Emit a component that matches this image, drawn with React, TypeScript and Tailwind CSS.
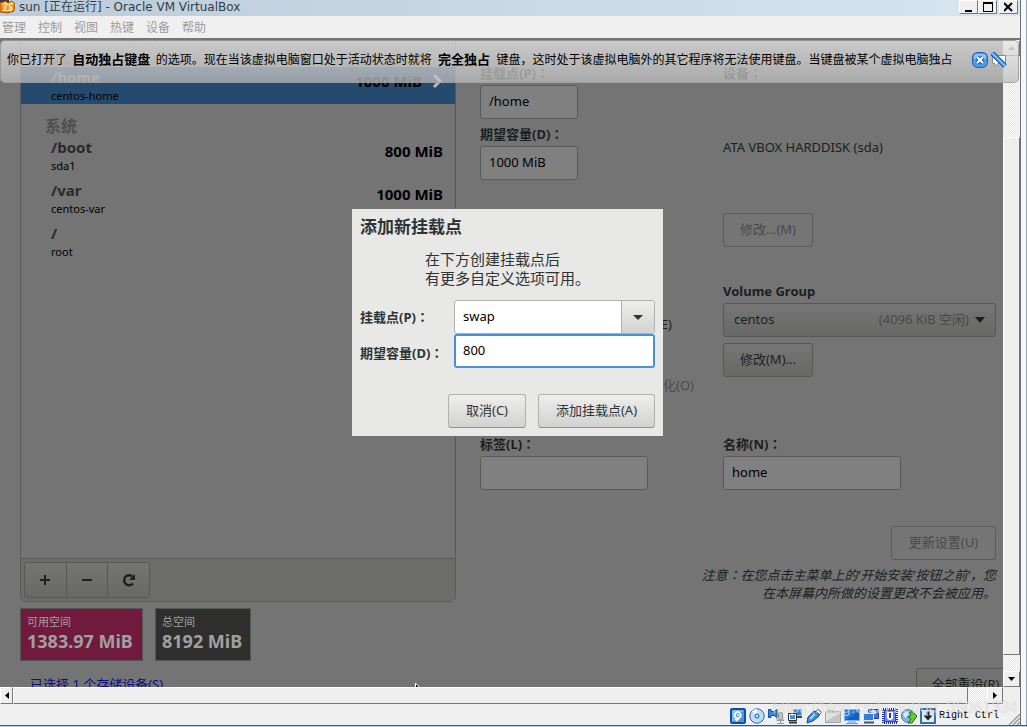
import { useState } from "react";
import type { ReactNode } from "react";

const menus = ["管理", "控制", "视图", "热键", "设备", "帮助"];

const systemMounts = [
  { path: "/boot", device: "sda1", size: "800 MiB" },
  { path: "/var", device: "centos-var", size: "1000 MiB" },
  { path: "/", device: "root", size: "" },
];

const guestFont = "font-['Noto_Sans','Noto_Sans_CJK_SC',sans-serif]";
const fieldClass =
  "block h-[34px] rounded-[3px] border border-[#5a5a5a] bg-[#808080] px-2 pb-[2px] text-[13px] text-black outline-none";
const buttonClass =
  "h-[34px] rounded-[3px] border border-[#575755] bg-linear-to-b from-[#757575] to-[#686866] text-[13px] text-[#1a1f1f]";
const disabledClass =
  "h-[34px] rounded-[3px] border border-[#5c5c5c] bg-[#757575] text-[13px] text-[#484a4a]";
const labelClass = "block text-[13px] leading-[18px] font-bold text-[#1a1f1f]";
const dialogButtonClass =
  "h-[34px] rounded-[3px] border border-[#b0b0ae] border-b-[#929290] bg-linear-to-b from-[#eeeeed] to-[#d2d2d0] text-[13px] text-[#2e3436]";
const raisedClass =
  "flex shrink-0 items-center justify-center border border-t-white border-l-white border-r-[#777] border-b-[#777] bg-[#efefef]";
const trackClass =
  "bg-[repeating-conic-gradient(#ffffff_0_25%,#e4e4e4_0_50%)] bg-[length:2px_2px]";

// full-width colon set in the middle of its cell
function Colon() {
  return <span className="font-['Noto_Sans_CJK_JP',sans-serif]">：</span>;
}

function StatusIcon({ label, children }: { label: string; children: ReactNode }) {
  return (
    <svg width="16" height="16" viewBox="0 0 16 16" role="img" aria-label={label}>
      {children}
    </svg>
  );
}

function TitleBar() {
  return (
    <header className="flex h-4 shrink-0 items-start justify-between overflow-hidden bg-linear-to-r from-[#bccbd9] to-[#d8e6f2]">
      <div className="flex items-center gap-1">
        <svg width="15" height="14" viewBox="0 0 15 14" aria-hidden="true">
          <path d="M0 0h9v4H0z" fill="#3c3c3c" />
          <path d="M0 3l6-2 2 2 4-2 3 3-1 7-6 2-8-1z" fill="#f08c14" stroke="#a85404" />
          <path d="M1 4l5-2 2 2 4-2 2 2-6 2z" fill="#ffd775" />
          <text x="3" y="11" fontSize="7" fontWeight="bold" fill="#fff" fontFamily="Liberation Sans">
            2.6
          </text>
        </svg>
        <h1 className="text-[12px] leading-[12px] text-[#333c46] font-['DejaVu_Sans','Noto_Sans_CJK_SC',sans-serif]">
          sun [正在运行] - Oracle VM VirtualBox
        </h1>
      </div>
      <div className="flex pr-[2px]">
        <button aria-label="最小化" className={`${raisedClass} h-[14px] w-[19px]`}>
          <svg width="9" height="10" viewBox="0 0 9 10">
            <path d="M1 8h7v2H1z" />
          </svg>
        </button>
        <button aria-label="最大化" className={`${raisedClass} h-[14px] w-[19px]`}>
          <svg width="10" height="10" viewBox="0 0 10 10">
            <path d="M0 0h10v10H0zM1 2v7h8V2z" fillRule="evenodd" />
          </svg>
        </button>
        <button aria-label="关闭" className={`${raisedClass} ml-[2px] h-[14px] w-[19px]`}>
          <svg width="9" height="10" viewBox="0 0 9 10">
            <path d="M0 1l8 8M8 1L0 9" stroke="#000" strokeWidth="2" />
          </svg>
        </button>
      </div>
    </header>
  );
}

function MenuBar() {
  return (
    <nav className="flex h-[22px] shrink-0 items-center gap-3 bg-[#f0f0f0] px-[2px] pt-[2px] text-[12px] leading-4 text-[#9c9c9c]">
      {menus.map((m) => (
        <button key={m}>{m}</button>
      ))}
    </nav>
  );
}

function CaptureNotice() {
  return (
    <div className="absolute top-0 -right-4 left-0 z-20 flex h-[43px] items-center justify-between rounded-[5px] border border-[#8c8c8c]/70 bg-linear-to-b from-[#e6e6e6]/75 to-[#bdbdbd]/75 pr-[11px] pb-1 pl-[6px]">
      <p className="text-[12px] whitespace-nowrap text-black">
        你已打开了 <b className="mx-[2px] text-[13px]">自动独占键盘</b> 的选项。现在当该虚拟电脑窗口处于活动状态时就将{" "}
        <b className="mx-[3px] text-[13px]">完全独占</b>{" "}
        键盘，这时处于该虚拟电脑外的其它程序将无法使用键盘。当键盘被某个虚拟电脑独占
      </p>
      <div className="flex items-center gap-[3px]">
        <button aria-label="关闭消息">
          <svg width="16" height="16" viewBox="0 0 16 16">
            <rect x=".5" y=".5" width="15" height="15" rx="5" fill="#4d9be6" stroke="#1c5cae" />
            <path d="M2 5q0-3 3-3h6q3 0 3 3v2H2z" fill="#8ec5f7" />
            <path d="M5 5l6 6M11 5l-6 6" stroke="#1c5cae" strokeWidth="4" />
            <path d="M5 5l6 6M11 5l-6 6" stroke="#fff" strokeWidth="2" />
          </svg>
        </button>
        <button aria-label="不再显示">
          <svg width="16" height="16" viewBox="0 0 16 16">
            <path d="M1.500 3.500h13v8H7l-3 3v-3H1.500z" fill="#fff" stroke="#8a8a8a" />
            <path d="M1 1l13 13" stroke="#1450a0" strokeWidth="5" />
            <path d="M1 1l13 13" stroke="#58a6ea" strokeWidth="3" />
            <path d="M1 1l13 13" stroke="#a9d4f8" strokeWidth="1" />
          </svg>
        </button>
      </div>
    </div>
  );
}

function MountList() {
  return (
    <section className="ml-5 flex w-[436px] shrink-0 flex-col rounded-b-md border border-[#595959]">
      <div className="min-h-[535px]">
        <h2 className="ml-4 text-[15px] leading-5 font-bold text-black">新 CentOS 7 安装</h2>
        <h3 className="mt-1 ml-6 text-[16px] leading-5 font-bold text-[#525252]">数据</h3>
        <div className="flex h-[37px] items-start justify-between bg-[#254a6e] pr-3 pl-[30px]">
          <div>
            <div className="text-[15px] leading-5 font-bold text-[#8a8078]">/home</div>
            <div className="text-[11px] leading-[18px] text-black">centos-home</div>
          </div>
          <div className="mt-1 flex items-center gap-[10px]">
            <span className="text-[15px] leading-5 font-bold text-black">1000 MiB</span>
            <svg width="11" height="16" viewBox="0 0 11 16" aria-hidden="true">
              <path d="M2 2l6 6-6 6" fill="none" stroke="#b8b8b8" strokeWidth="3" />
            </svg>
          </div>
        </div>
        <h3 className="mt-3 ml-6 text-[16px] leading-5 font-bold text-[#4f4f4f]">系统</h3>
        <ul className="mt-px flex flex-col gap-[6px]">
          {systemMounts.map((m) => (
            <li key={m.path} className="flex h-[37px] items-start justify-between pr-3 pl-[30px]">
              <div>
                <div className="text-[15px] leading-5 font-bold text-[#2a2a2a]">{m.path}</div>
                <div className="text-[11px] leading-[18px] text-black">{m.device}</div>
              </div>
              <span className="mt-1 text-[15px] leading-5 font-bold text-black">{m.size}</span>
            </li>
          ))}
        </ul>
      </div>
      <div className="flex h-[43px] items-center rounded-b-md border-t border-[#595959] bg-[#6c6c6a] px-[3px]">
        <div className="flex h-9 w-[126px] divide-x divide-[#575755] rounded-[3px] border border-[#575755] bg-linear-to-b from-[#757575] to-[#686866]">
          <button aria-label="添加" className="flex flex-1 items-center justify-center">
            <svg width="12" height="12" viewBox="0 0 12 12">
              <path d="M6 1v10M1 6h10" stroke="#1a1f1f" strokeWidth="2" />
            </svg>
          </button>
          <button aria-label="删除" className="flex flex-1 items-center justify-center">
            <svg width="12" height="12" viewBox="0 0 12 12">
              <path d="M1 6h10" stroke="#1a1f1f" strokeWidth="2" />
            </svg>
          </button>
          <button aria-label="重新载入" className="flex flex-1 items-center justify-center">
            <svg width="16" height="16" viewBox="0 0 16 16">
              <path d="M12 11.500A5 5 0 1 1 11.500 4.600" fill="none" stroke="#1a1f1f" strokeWidth="2.400" />
              <path d="M14 2v6H8z" fill="#1a1f1f" />
            </svg>
          </button>
        </div>
      </div>
    </section>
  );
}

function MountForm() {
  return (
    <section className="ml-6 min-w-0 flex-1 pr-[19px]">
      <h2 className="text-[15px] leading-5 font-bold text-black">centos-home</h2>
      <div className="mt-[22px] grid grid-cols-[243px_1fr]">
        <div>
          <label htmlFor="mount" className={labelClass}>挂载点(P)<Colon /></label>
          <input id="mount" defaultValue="/home" className={`${fieldClass} mt-[3px] w-[98px]`} />
          <label htmlFor="size" className={`${labelClass} mt-[6px]`}>期望容量(D)<Colon /></label>
          <input id="size" defaultValue="1000 MiB" className={`${fieldClass} mt-[3px] w-[98px]`} />
          <div className="mt-[135px] w-[192px] text-right text-[13px] leading-[18px] text-[#1a1f1f]">
            加密(E)
          </div>
          <div className="mt-[43px] w-[214px] text-right text-[13px] leading-[18px] text-[#4a4c4c]">
            重新格式化(O)
          </div>
          <label htmlFor="tag" className={`${labelClass} mt-[41px]`}>标签(L)<Colon /></label>
          <input id="tag" className={`${fieldClass} mt-[3px] w-[168px]`} />
        </div>
        <div>
          <div className={labelClass}>设备<Colon /></div>
          <div className="mt-14 text-[13px] leading-[18px] text-[#1a1f1f]">ATA VBOX HARDDISK (sda)</div>
          <button disabled className={`${disabledClass} mt-[57px] w-[90px]`}>修改...(M)</button>
          <label htmlFor="vg" className={`${labelClass} mt-[35px]`}>Volume Group</label>
          <div className="relative mt-[3px]">
            <select id="vg" className={`${buttonClass} block w-full appearance-none px-[10px] outline-none`}>
              <option>centos</option>
            </select>
            <span className="pointer-events-none absolute inset-y-0 right-[11px] flex items-center gap-[6px] text-[13px] text-[#484a4a]">
              (4096 KiB 空闲)
              <svg width="10" height="6" viewBox="0 0 10 6">
                <path d="M0 0h10L5 6z" fill="#1a1f1f" />
              </svg>
            </span>
          </div>
          <button className={`${buttonClass} mt-[6px] w-[90px]`}>修改(M)...</button>
          <label htmlFor="name" className={`${labelClass} mt-[58px]`}>名称(N)<Colon /></label>
          <input id="name" defaultValue="home" className={`${fieldClass} mt-[3px] w-[178px]`} />
        </div>
      </div>
      <div className="mt-9 flex flex-col items-end">
        <button disabled className={`${disabledClass} w-[105px]`}>更新设置(U)</button>
        <p className="mt-[6px] text-right text-[13px] leading-[18px] text-[#1a1f1f] italic">
          注意<Colon />在您点击主菜单上的'开始安装'按钮之前'，您
          <br />
          在本屏幕内所做的设置更改不会被应用。
        </p>
      </div>
    </section>
  );
}

function AddMountDialog() {
  const [mount, setMount] = useState("swap");
  const [size, setSize] = useState("800");

  return (
    <div
      role="dialog"
      aria-labelledby="dialog-title"
      className="absolute inset-x-0 top-[187px] z-10 mx-auto w-[311px] bg-[#e8e8e7] p-2 text-[#2e3436]"
    >
      <h2 id="dialog-title" className="text-[17px] leading-5 font-bold">添加新挂载点</h2>
      <p className="mt-[13px] ml-[65px] text-[15px] leading-[19px]">
        在下方创建挂载点后
        <br />
        有更多自定义选项可用。
      </p>
      <div className="mt-3 grid grid-cols-[94px_minmax(0,1fr)] items-center text-[13px]">
        <label htmlFor="new-mount" className="font-bold whitespace-nowrap">挂载点(P)<Colon /></label>
        <div className="flex h-[34px] rounded-[3px] border border-[#b0b0ae] bg-white">
          <input
            id="new-mount"
            value={mount}
            onChange={(e) => setMount(e.target.value)}
            className="min-w-0 flex-1 px-2 text-black outline-none"
          />
          <button
            aria-label="展开"
            className="flex w-[33px] shrink-0 items-center justify-center rounded-r-[3px] border-l border-[#b0b0ae] bg-linear-to-b from-[#eeeeed] to-[#d2d2d0]"
          >
            <svg width="10" height="5" viewBox="0 0 10 5">
              <path d="M0 0h10L5 5z" fill="#2e3436" />
            </svg>
          </button>
        </div>
        <label htmlFor="new-size" className="pt-[5px] font-bold whitespace-nowrap">期望容量(D)<Colon /></label>
        <input
          id="new-size"
          value={size}
          onChange={(e) => setSize(e.target.value)}
          className="h-[34px] w-full rounded-[3px] border-2 border-[#4a90d9] bg-white px-[7px] pb-[2px] text-black outline-none"
        />
      </div>
      <div className="mt-[26px] flex justify-end gap-3">
        <button className={`${dialogButtonClass} w-[78px]`}>取消(C)</button>
        <button className={`${dialogButtonClass} w-[117px]`}>添加挂载点(A)</button>
      </div>
    </div>
  );
}

function GuestScreen() {
  return (
    <main className={`relative -mt-[18px] w-[calc(100%+12px)] ${guestFont}`}>
      <div className="flex">
        <MountList />
        <MountForm />
      </div>
      <div className="mt-[6px] ml-5 flex gap-3 text-[#a0a0a0]">
        <div className="h-[53px] w-[123px] border border-[#555] bg-[#701a3d] px-[6px] pt-[5px]">
          <div className="text-[11px] leading-4">可用空间</div>
          <div className="text-[18px] leading-[22px] font-bold whitespace-nowrap">1383.97 MiB</div>
        </div>
        <div className="h-[53px] w-24 border border-[#555] bg-[#2e2f2d] px-[6px] pt-[5px]">
          <div className="text-[11px] leading-4">总空间</div>
          <div className="text-[18px] leading-[22px] font-bold whitespace-nowrap">8192 MiB</div>
        </div>
      </div>
      <div className="mt-[7px] flex items-start justify-between pl-[30px]">
        <a href="#storage" className="pt-[7px] text-[13px] leading-[18px] text-[#0c0c8c]">
          已选择 1 个存储设备(S)
        </a>
        <button className={`${buttonClass} w-[99px]`}>全部重设(R)</button>
      </div>
      <svg className="absolute top-[661px] left-[415px]" width="9" height="14" viewBox="0 0 9 14" aria-hidden="true">
        <path d="M.5 0v12l3-3h5z" fill="#000" stroke="#fff" />
      </svg>
      <AddMountDialog />
    </main>
  );
}

function StatusBar() {
  return (
    <footer className="relative flex h-[21px] shrink-0 items-center justify-end gap-[3px] bg-[#f0f0f0] pt-[2px] pr-[21px]">
      <StatusIcon label="硬盘">
        <rect x="1" y="1" width="14" height="14" rx="1" fill="#4a98e8" stroke="#0d4fa0" strokeWidth="2" />
        <path d="M3 13V3h10" fill="none" stroke="#b5dbff" />
        <path d="M5 12l2-2a3 3 0 1 1 3-1L6 13" fill="none" stroke="#fff" strokeWidth="2" />
        <circle cx="8" cy="7" r="1" fill="#fff" />
      </StatusIcon>
      <StatusIcon label="光驱">
        <circle cx="8" cy="8" r="7.200" fill="#c4dcf8" stroke="#2e63b5" />
        <path d="M8 8L3 3a7 7 0 0 1 5-2z" fill="#fff" />
        <path d="M8 8l6 2a7 7 0 0 1-4 4z" fill="#a5e8d8" />
        <circle cx="8" cy="8" r="2.500" fill="#4c7fcf" />
        <circle cx="8" cy="8" r="1" fill="#fff" />
      </StatusIcon>
      <StatusIcon label="音频">
        <path d="M.5 1.500H3v2h3l3-2v8l-3-2H3v2H.5z" fill="#3a8be0" stroke="#15529f" />
        <rect x="10.500" y="4.500" width="4" height="7" rx="1" fill="#c5c5c5" stroke="#888" />
        <path d="M9 10v2.500h7V10M12.500 12v3M9 15.500h7" fill="none" stroke="#999" />
      </StatusIcon>
      <StatusIcon label="网络">
        <path d="M6.500 1.500h8v6h-8z" fill="#2f80dd" stroke="#9dbbe0" />
        <path d="M9 9h6" stroke="#444" strokeWidth="2" />
        <path d="M1.500 5.500h8v7h-8z" fill="#f5faff" stroke="#2c2c2c" />
        <path d="M3 7h5v4H3z" fill="#3b8be5" />
        <path d="M2 14.500h8" stroke="#333" strokeWidth="2" />
      </StatusIcon>
      <StatusIcon label="USB">
        <path d="M9 4l3-3 3.500 3.500-3 3z" fill="#eee" stroke="#555" />
        <path d="M1 15l1-6 6-6q5 1 5 5l-6 5z" fill="#3c8de2" stroke="#0f4b98" />
        <path d="M4 11l5-5" stroke="#aad5ff" strokeWidth="2" />
      </StatusIcon>
      <StatusIcon label="共享文件夹">
        <path d="M.5 4.500l3-2h4l1 1h7v11H.5z" fill="#c5c5c5" stroke="#a5a5a5" />
        <path d="M1 5h14L1 13z" fill="#e2e2e2" />
      </StatusIcon>
      <StatusIcon label="显示">
        <path d="M.5 1.500h15v11H.5z" fill="#2478dc" stroke="#7ab6f5" />
        <path d="M1 12L15 4v8z" fill="#1660bd" />
        <path d="M4 14h8M2 15.500h12" stroke="#7d93b0" />
      </StatusIcon>
      <StatusIcon label="录像">
        <path d="M5.500 1.500h10v9h-10z" fill="#4570d8" stroke="#22369a" />
        <path d="M8 2h5v4H8z" fill="#cbdcff" />
        <path d="M.5 5.500h10v7H.5z" fill="#2a7fe0" stroke="#dbe8f8" />
        <path d="M1 14.500h10" stroke="#555" strokeWidth="2" />
      </StatusIcon>
      <StatusIcon label="处理器">
        <rect x="1" y="1" width="14" height="14" fill="#d6dcfa" stroke="#2633a8" strokeWidth="2" strokeDasharray="1 1" />
        <rect x="2.500" y="2.500" width="11" height="11" fill="#6f86ea" stroke="#3340b8" />
        <path d="M5 4v5a3 3 0 0 0 6 0V4z" fill="#fff" />
        <path d="M8 5v5" stroke="#2633a8" strokeWidth="2" />
      </StatusIcon>
      <StatusIcon label="鼠标集成">
        <circle cx="7" cy="8" r="6.500" fill="#7db8e6" stroke="#4b7299" />
        <path d="M2 6l4-3 2 3-4 4z" fill="#d5edff" />
        <path d="M8 4h4l4 4-5 7H7l3-4-3-2 3-2z" fill="#5fcf35" stroke="#1f6b12" />
      </StatusIcon>
      <StatusIcon label="键盘捕获">
        <rect x="1" y="1" width="14" height="14" fill="#dcecfb" stroke="#3b6ea5" strokeWidth="2" />
        <path d="M8 3.500v5" stroke="#222" strokeWidth="3" />
        <path d="M3.500 7.500h9L8 12.500z" fill="#222" />
      </StatusIcon>
      <span className="text-[10px] text-black font-['Liberation_Mono',monospace]">Right Ctrl</span>
      <svg className="absolute right-0 bottom-0" width="11" height="11" viewBox="0 0 11 11" aria-hidden="true">
        <path d="M0 11L11 0M4 11l7-7M8 11l3-3" stroke="#999" strokeWidth="1.500" />
      </svg>
      <span className="pointer-events-none absolute right-[2px] bottom-[7px] text-[16px] leading-5 text-white/60 [text-shadow:0_0_1px_#0003] font-['Liberation_Sans',sans-serif]">
        https://blog.csdn.net/qq_35061334
      </span>
    </footer>
  );
}

export default function App() {
  return (
    <div className="flex h-screen flex-col overflow-hidden bg-[#f4f8fc] font-['Liberation_Sans','Noto_Sans_CJK_SC',sans-serif]">
      <div className="flex min-h-0 flex-1 border-r border-[#9aa4ae] pr-[5px]">
        <div className="flex min-w-0 flex-1 flex-col border-r border-[#6f6f6f]">
          <TitleBar />
          <MenuBar />
          <div className="flex min-h-0 flex-1 border-t-2 border-[#767676]">
            <div className="relative min-w-0 flex-1">
              <div className="h-full overflow-hidden bg-[#747474]">
                <GuestScreen />
              </div>
              <CaptureNotice />
            </div>
            <div className={`flex w-[17px] shrink-0 flex-col ${trackClass}`}>
              <button aria-label="向上滚动" className={`${raisedClass} h-4`}>
                <svg width="7" height="4" viewBox="0 0 7 4">
                  <path d="M0 4h7L3.500 0z" fill="#777" />
                </svg>
              </button>
              <div className={`${raisedClass} mt-[81px] mb-4 min-h-0 flex-1 shrink`} />
              <button aria-label="向下滚动" className={`${raisedClass} h-4`}>
                <svg width="7" height="4" viewBox="0 0 7 4">
                  <path d="M0 0h7L3.500 4z" />
                </svg>
              </button>
            </div>
          </div>
          <div className="flex h-[17px] shrink-0 bg-[#efefef] pr-[17px]">
            <div className={`flex flex-1 ${trackClass}`}>
              <button aria-label="向左滚动" className={`${raisedClass} w-[13px]`}>
                <svg width="4" height="7" viewBox="0 0 4 7">
                  <path d="M4 0v7L0 3.500z" />
                </svg>
              </button>
              <div className={`${raisedClass} mr-[19px] min-w-0 flex-1 shrink`} />
              <button aria-label="向右滚动" className={`${raisedClass} w-4`}>
                <svg width="4" height="7" viewBox="0 0 4 7">
                  <path d="M0 0v7l4-3.500z" />
                </svg>
              </button>
            </div>
          </div>
          <StatusBar />
        </div>
      </div>
      <div className="h-[2px] shrink-0 border-t border-[#4a5866] bg-[#b8cddd]" />
    </div>
  );
}
